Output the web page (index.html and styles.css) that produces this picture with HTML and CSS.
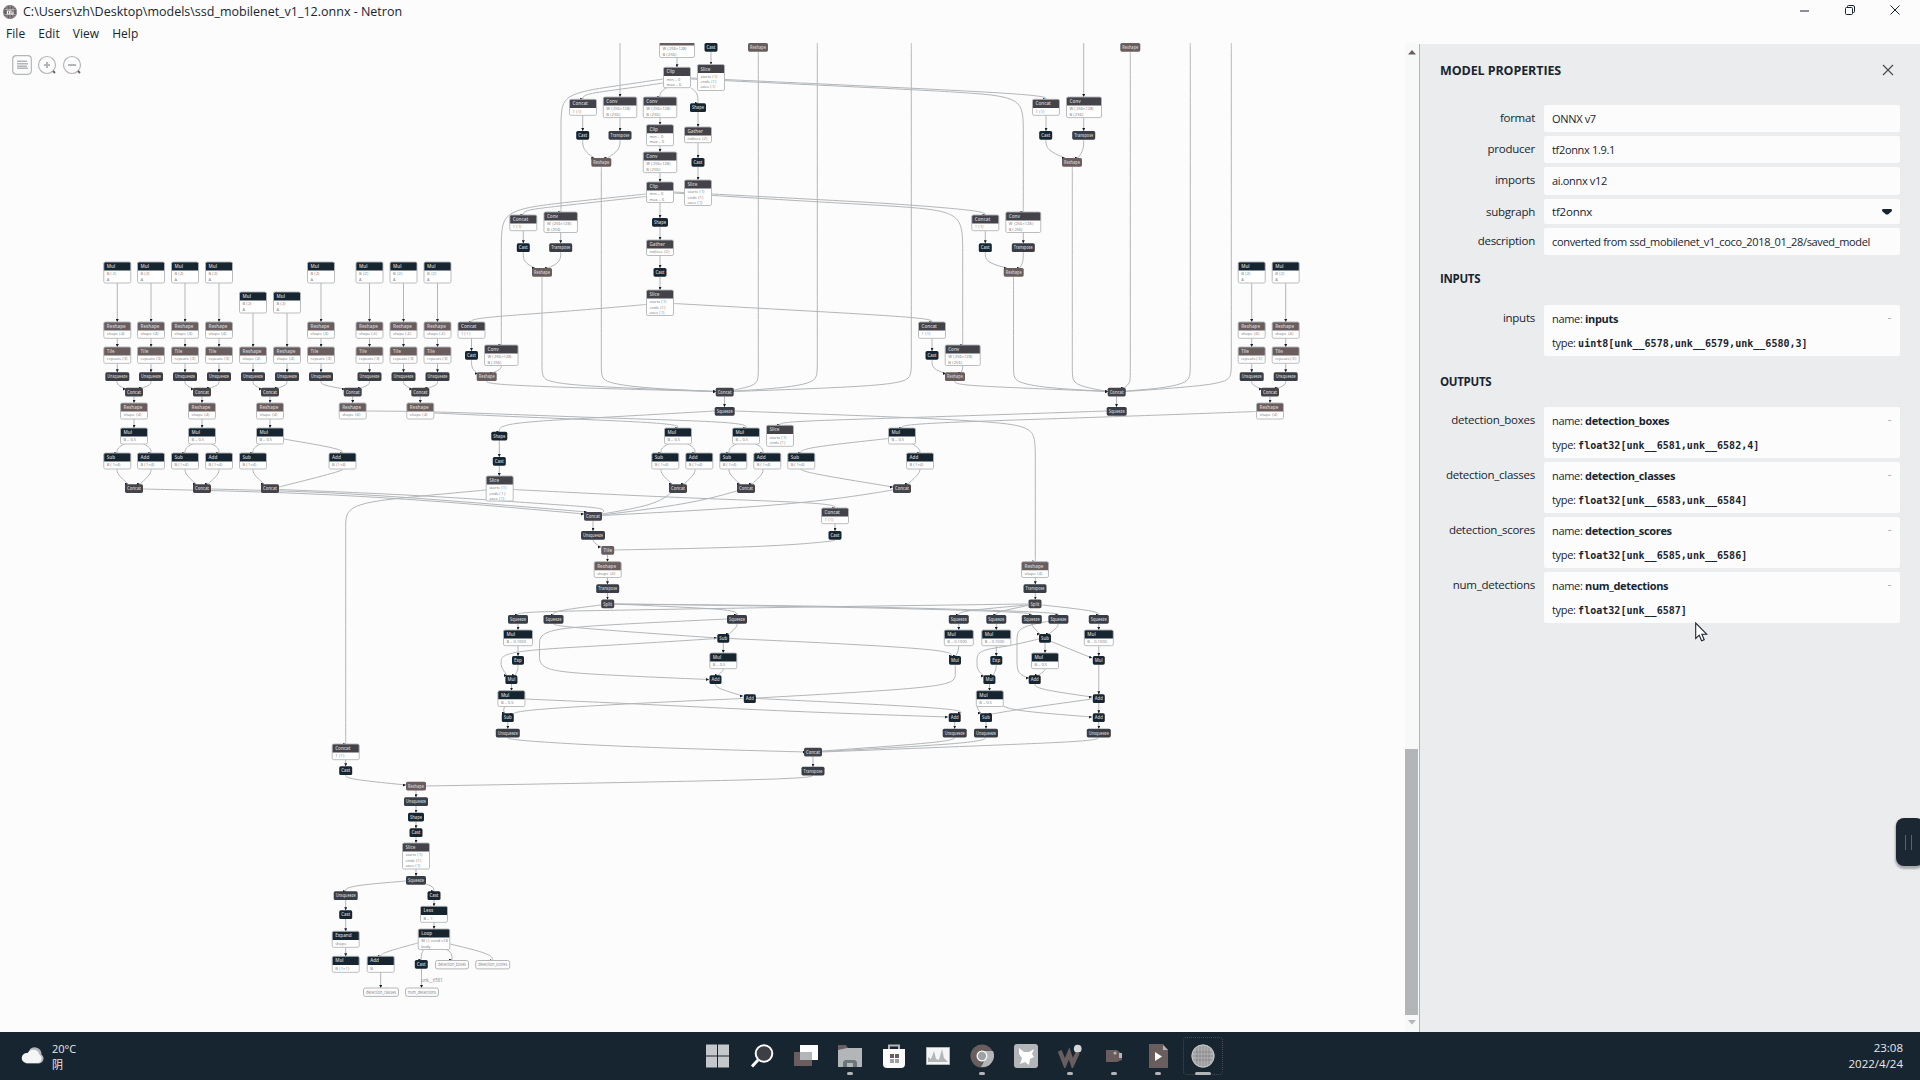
FILE: index.html
```
<!DOCTYPE html>
<html lang="en">
<head>
<meta charset="utf-8">
<title>ssd_mobilenet_v1_12.onnx - Netron</title>
<link rel="stylesheet" href="styles.css">
</head>
<body>
<header class="titlebar">
  <svg class="app-icon" viewBox="0 0 14 14"><circle cx="7" cy="7" r="7" fill="#6a5d5d"/><path d="M4 2.2v9.6M7 1v12M10 2.2v9.6M2 4.5h10M1.5 9.5h11" stroke="#b2b6b9" stroke-width=".8" fill="none"/><circle cx="7" cy="7" r="6.4" fill="none" stroke="#b2b6b9" stroke-dasharray="1.2 1.2"/><path d="M4.5 6h2v3h-2zM8 5v4h2V6.5" stroke="#fff" stroke-width=".9" fill="none"/></svg>
  <span class="window-title">C:\Users\zh\Desktop\models\ssd_mobilenet_v1_12.onnx - Netron</span>
  <div class="window-controls">
    <svg viewBox="0 0 12 12"><path d="M1 7h9"/></svg>
    <svg viewBox="0 0 12 12"><path d="M1.5 4.5a1 1 0 0 1 1-1h5a1 1 0 0 1 1 1v5a1 1 0 0 1-1 1h-5a1 1 0 0 1-1-1zM3.5 3.500V2.500a1 1 0 0 1 1-1h4.500a1.500 1.500 0 0 1 1.500 1.500v4.500a1 1 0 0 1-1 1h-1"/></svg>
    <svg viewBox="0 0 12 12"><path d="M1.500 1.500l9 9M10.500 1.500l-9 9"/></svg>
  </div>
</header>
<nav class="menubar"><span>File</span><span>Edit</span><span>View</span><span>Help</span></nav>
<main class="workspace">
  <section class="canvas">
    <svg id="graph" class="graph" width="1405" height="989" viewBox="0 43 1405 989">
      <defs><marker id="arrow" viewBox="0 0 4 4" refX="4" refY="2" markerWidth="3" markerHeight="3" markerUnits="userSpaceOnUse" orient="auto"><path class="arrow" d="M0 0L4 2L0 4z"/></marker></defs>
    </svg>
    <div class="toolbar">
      <svg width="20" height="20" viewBox="0 0 20 20"><rect x=".7" y=".7" width="18.600" height="18.600" rx="3.500"/><path stroke-width="1.400" d="M5 6.300h10M5 8.800h11M5 11.300h10M5 13.300h11"/></svg>
      <svg width="20" height="20" viewBox="0 0 20 20"><circle cx="10" cy="10" r="8.500"/><path stroke-width="2" d="M7 10h6M10 7v6"/><path class="tail" d="M16 16l2 2"/></svg>
      <svg width="20" height="20" viewBox="0 0 20 20"><circle cx="10" cy="10" r="8.500"/><path stroke-width="2" d="M6 10h8"/><path class="tail" d="M16 16l2 2"/></svg>
    </div>
  </section>
  <div class="scrollbar">
    <svg class="up" viewBox="0 0 8 5"><path d="M4 0l4 4.500H0z"/></svg>
    <div class="thumb"></div>
    <svg class="down" viewBox="0 0 8 5"><path d="M0 0h8L4 4.500z"/></svg>
  </div>
  <aside class="sidebar">
    <div class="sidebar-head"><h1>MODEL PROPERTIES</h1><svg viewBox="0 0 12 12"><path d="M1 1l10 10M11 1L1 11"/></svg></div>
    <dl class="props">
      <dt>format</dt><dd>ONNX v7</dd>
      <dt>producer</dt><dd>tf2onnx 1.9.1</dd>
      <dt>imports</dt><dd>ai.onnx v12</dd>
      <dt>subgraph</dt><dd class="select">tf2onnx<svg viewBox="0 0 10 6"><path d="M.5 0h9L10 2 6 5.500H4L0 2z"/></svg></dd>
      <dt>description</dt><dd>converted from ssd_mobilenet_v1_coco_2018_01_28/saved_model</dd>
    </dl>
    <h2>INPUTS</h2>
    <dl class="args">
      <dt>inputs</dt><dd><i>-</i><p>name: <b>inputs</b></p><p>type: <code>uint8[unk__6578,unk__6579,unk__6580,3]</code></p></dd>
    </dl>
    <h2 class="outputs">OUTPUTS</h2>
    <dl class="args">
      <dt>detection_boxes</dt><dd><i>-</i><p>name: <b>detection_boxes</b></p><p>type: <code>float32[unk__6581,unk__6582,4]</code></p></dd>
      <dt>detection_classes</dt><dd><i>-</i><p>name: <b>detection_classes</b></p><p>type: <code>float32[unk__6583,unk__6584]</code></p></dd>
      <dt>detection_scores</dt><dd><i>-</i><p>name: <b>detection_scores</b></p><p>type: <code>float32[unk__6585,unk__6586]</code></p></dd>
      <dt>num_detections</dt><dd><i>-</i><p>name: <b>num_detections</b></p><p>type: <code>float32[unk__6587]</code></p></dd>
    </dl>
  </aside>
</main>
<div class="side-handle"><span></span><span></span></div>
<svg class="cursor" viewBox="0 0 13 20"><path d="M.7 1v15.500l3.600-3.300 2.300 5.600 2.600-1.100-2.300-5.400h5z"/></svg>
<footer class="taskbar">
  <div class="weather">
    <svg width="23" height="17" viewBox="0 0 23 17"><path fill="#b2b6b9" d="M5 16.500h13a5 5 0 0 0 2.500-9A7 7 0 0 0 9 2z"/><path fill="#f4f5f5" d="M5 16h11a4.500 4.500 0 0 0 2.500-8.300A6.500 6.500 0 0 0 6.500 6 5 5 0 0 0 5 16z"/></svg>
    <div><div>20°C</div><div>阴</div></div>
  </div>
  <div class="apps">
    <div class="app"><svg viewBox="0 0 24 24"><path fill="#c4c8ca" d="M0 .5h11v11H0zM12 .5h11v11H12zM0 12.500h11v11H0zM12 12.500h11v11H12z"/></svg></div>
    <div class="app"><svg viewBox="0 0 24 24"><circle cx="14" cy="9.500" r="8.300" fill="#3d3f46" stroke="#fafafa" stroke-width="2"/><path d="M8 16l-6 6.500" stroke="#fafafa" stroke-width="3"/></svg></div>
    <div class="app"><svg viewBox="0 0 24 24"><path fill="#6a5d5d" d="M0 8h18v14H0z"/><path fill="#fff" d="M6 1h18v15H6z"/><path fill="#b2b6b9" d="M6 8h12v8H6z"/></svg></div>
    <div class="app run"><svg viewBox="0 0 24 24"><path fill="#6a5d5d" d="M0 1h8l2 3v4H0z"/><path fill="#b2b6b9" d="M0 6l9-2h15v19H0z"/><path fill="#6b757c" d="M5 23v-5l2-2h10l2 2v5z"/><path fill="#b2b6b9" d="M9 19h6v4H9z"/></svg></div>
    <div class="app"><svg viewBox="0 0 24 24"><path d="M7 6V1.500h10V6" stroke="#b2b6b9" stroke-width="2" fill="none"/><path fill="#fcfcfc" d="M1 5h22v15q0 4-4 4H5q-4 0-4-4z"/><path fill="#6a5d5d" d="M8 10h4v4H8zM13 10h4v4h-4z"/><path fill="#9ca2a6" d="M8 15h4v4H8zM13 15h4v4h-4z"/></svg></div>
    <div class="app"><svg viewBox="0 0 24 24"><path fill="#f4f5f5" stroke="#b2b6b9" d="M.5 3.500h23v17H.5z"/><path fill="#b2b6b9" d="M2 18v-5l3 2 3-8 2 8 3 1 3-11 2 9 4 4z"/></svg></div>
    <div class="app run"><svg viewBox="0 0 24 24"><circle cx="12" cy="12" r="11.500" fill="#6a5d5d"/><path fill="#b2b6b9" d="M12 7h11a11.500 11.500 0 0 1-12 16l5-9z"/><circle cx="12" cy="12" r="5.500" fill="#fafafa"/><circle cx="12" cy="12" r="4.200" fill="#9ca2a6"/></svg></div>
    <div class="app"><svg viewBox="0 0 24 24"><rect width="24" height="24" rx="3" fill="#b2b6b9"/><path fill="#fff" d="M5 4l5 4h5l5-3-2 5 2 3-4 2-1 6-4-3-5 2 2-6-3-4z"/></svg></div>
    <div class="app run"><svg viewBox="0 0 28 24"><path d="M2 6l6 15 5-12 4 12 6-13" stroke="#6a5d5d" stroke-width="5" fill="none"/><circle cx="23" cy="3.500" r="4.500" fill="#d5d8d9"/></svg></div>
    <div class="app run"><svg viewBox="0 0 24 24"><path fill="#6a5d5d" d="M4 6h11l5 4v6l-5 2H4z"/><circle cx="13" cy="9" r="1.500" fill="#b2b6b9"/><path fill="#b2b6b9" d="M17 9h3v5h-3z"/></svg></div>
    <div class="app run"><svg viewBox="0 0 24 24"><path fill="#6a5d5d" d="M3 0h14l5 6v18H3z"/><path fill="#b2b6b9" d="M17 1v5h5z"/><path fill="#fff" d="M9 8l7 4.500L9 17z"/></svg></div>
    <div class="app active"><svg viewBox="0 0 24 24"><circle cx="12" cy="12" r="11.500" fill="#aeb1b4"/><path d="M6 3v18M9 1v22M12 1v22M15 1v22M18 3v18M1 8h22M1 12h22M1 16h22" stroke="#857d7f" stroke-width=".7"/><circle cx="12" cy="12" r="11" fill="none" stroke="#c3c6c8"/></svg></div>
  </div>
  <div class="clock"><div>23:08</div><div>2022/4/24</div></div>
</footer>
<script src="graph.js"></script>
</body>
</html>
```
FILE: styles.css
```
* { box-sizing: border-box; }
body { margin: 0; width: 1920px; height: 1080px; overflow: hidden; display: flex; flex-direction: column; background: #fcfcfc; color: #172531; font-family: "Open Sans", "Noto Sans", "Noto Sans CJK SC", sans-serif; }
.titlebar { height: 22px; display: flex; align-items: center; padding: 1px 19px 0 3px; }
.app-icon { width: 14px; height: 14px; }
.window-title { margin-left: 6px; font-size: 12.5px; line-height: 20px; white-space: nowrap; }
.window-controls { margin-left: auto; display: flex; gap: 33px; padding-bottom: 3px; }
.window-controls svg { width: 12px; height: 12px; fill: none; stroke: #172531; }
.menubar { height: 21px; display: flex; gap: 13px; padding-left: 6px; font-size: 12px; letter-spacing: .05px; line-height: 23px; }
.workspace { height: 989px; display: flex; }
.canvas { width: 1405px; position: relative; overflow: hidden; }
.graph { display: block; }
.toolbar { position: absolute; left: 12px; top: 12px; display: flex; gap: 5px; }
.toolbar svg { fill: none; stroke: #b2b6b9; stroke-width: 1.2; }
.toolbar .tail { stroke: #6a5d5d; stroke-width: 1.8; }

.edge { fill: none; stroke: #b2b6b9; stroke-width: 1; }
.arrow { fill: #17202a; }
.frame { fill: none; stroke: #b2b6b9; stroke-width: .9; }
.body { fill: #fff; }
.op { fill: #172531; }
.shape { fill: #6a5d5d; }
.tensor { fill: #44434a; }
.mixed { fill: #393d45; }
.label { fill: #d0d2d4; font: 600 4.6px "Open Sans", sans-serif; }
.attr { fill: #74767a; font: 4px "Open Sans", sans-serif; }
.io { fill: #fcfcfc; stroke: #b2b6b9; }
.io-label { fill: #85898c; font: 4.4px "Open Sans", sans-serif; text-anchor: middle; }

.scrollbar { width: 14px; display: flex; flex-direction: column; align-items: center; background: #f7f8f8; padding: 7px 1px 7px 0; }
.scrollbar svg { width: 8px; height: 5px; fill: #6a5d5d; }
.scrollbar .down { fill: #b2b6b9; margin-top: auto; }
.thumb { width: 13px; height: 266px; background: #b2b6b9; margin-top: 694px; }

.sidebar { width: 501px; margin-top: 1px; background: #ebeced; border-left: 1px solid #b2b6b9; padding: 0 19px 0 20px; }
.sidebar-head { height: 61px; display: flex; align-items: flex-start; justify-content: space-between; padding: 17px 7px 0 0; }
h1, h2 { margin: 0; font-weight: 700; white-space: nowrap; }
h1 { font-size: 12.5px; line-height: 20px; letter-spacing: -.1px; }
.sidebar-head svg { width: 12px; height: 12px; fill: none; stroke: #4c4a4e; stroke-width: 1.2; margin-top: 3px; }
dl { margin: 0; display: grid; grid-template-columns: 95px 356px; column-gap: 9px; }
dt { text-align: right; white-space: nowrap; font-size: 11.5px; letter-spacing: -.25px; }
dd { margin: 0; background: #fcfcfc; border-radius: 2px; padding-left: 8px; white-space: nowrap; font-size: 11px; letter-spacing: -.33px; }
.props { grid-template-rows: 27px 27px 28px 25px 27px; row-gap: 4px; }
.props dt { line-height: 26px; }
.props dd { line-height: 28px; }
.props dd:last-child { line-height: 27px; }
.props .select { line-height: 27px; display: flex; justify-content: space-between; align-items: center; padding-right: 8px; font-size: 11.5px; letter-spacing: -.2px; }
.select svg { width: 10px; height: 6px; fill: #172531; }
h2 { font-size: 11.5px; letter-spacing: -.3px; line-height: 16px; padding: 16px 0; height: 50px; }
.outputs { padding-top: 18px; height: 51px; }
.args { grid-auto-rows: 51px; row-gap: 4px; }
.args dt { line-height: 25px; }
.args dd { padding: 2px 8px 0; position: relative; }
.args p { margin: 0; line-height: 24px; }
.args b { font-weight: 700; }
.args i { position: absolute; right: 9px; top: 0; line-height: 24px; font-style: normal; color: #9da1a4; }
code { font: bold 10px "DejaVu Sans Mono", monospace; letter-spacing: .02px; }

.side-handle { position: absolute; left: 1896px; top: 818px; width: 28px; height: 48px; background: #1b2732; border-radius: 8px; box-shadow: 0 2px 2px 1px #a9aaad; display: flex; gap: 5px; padding: 17px 9px; }
.side-handle span { width: 1px; height: 15px; background: #6a5d5d; }
.cursor { position: absolute; left: 1695px; top: 622px; width: 13px; height: 20px; fill: #fff; stroke: #172531; stroke-width: 1.1; }

.taskbar { height: 48px; background: #172531; display: flex; justify-content: space-between; color: #e8e9ea; font-size: 11px; line-height: 16px; padding: 0 17px 0 21px; }
.weather { width: 300px; display: flex; gap: 8px; padding-top: 9px; }
.weather svg { margin-top: 6px; }
.clock { width: 300px; padding-top: 8px; text-align: right; font-size: 11.5px; }
.apps { position: absolute; left: 696px; display: flex; }
.app { width: 44.050px; height: 48px; padding: 12px 10px 0; position: relative; }
.app svg { width: 24px; height: 24px; display: block; }
.app.run::after, .app.active::after { content: ""; position: absolute; left: 19px; top: 40px; width: 6px; height: 3px; border-radius: 2px; background: #b2b6b9; }
.app.active::after { left: 14px; width: 16px; }
.app.active::before { content: ""; position: absolute; inset: 5px 2px; border: 1px dotted #4b4b51; border-radius: 4px; }
```
FILE: graph.js
```
const NS = 'http://www.w3.org/2000/svg';
const root = document.getElementById('graph');

function add(tag, attrs, text) {
  const el = document.createElementNS(NS, tag);
  for (const key in attrs) el.setAttribute(key, attrs[key]);
  if (text) el.textContent = text;
  root.appendChild(el);
}

// Smooth an edge as a uniform cubic B-spline through its control points.
function spline(p) {
  if (p.length < 3) return `M${p[0]}L${p[1]}`;
  let d = `M${p[0]}`;
  const q = [p[0], p[0], ...p, p[p.length - 1], p[p.length - 1]];
  const mix = (a, b, k) => [0, 1].map(i => (a[i] * (3 - k) + b[i] * k) / 3);
  for (let i = 1; i < q.length - 2; i++) {
    const c1 = mix(q[i], q[i + 1], 1), c2 = mix(q[i], q[i + 1], 2);
    const n = mix(q[i + 1], q[i + 2], 1);
    d += `C${c1} ${c2} ${(c2[0] + n[0]) / 2},${(c2[1] + n[1]) / 2}`;
  }
  return d + `L${p[p.length - 1]}`;
}
function edge(...n) {
  const p = [];
  for (let i = 0; i < n.length; i += 2) p.push([n[i], n[i + 1]]);
  add('path', { class: 'edge', d: spline(p), 'marker-end': 'url(#arrow)' });
}
function down(x, ...ys) { for (let i = 0; i < ys.length; i += 2) edge(x, ys[i], x, ys[i + 1]); }

const SMALL = { Cast: ['op', 13], Shape: ['op', 16], Reshape: ['shape', 20], Transpose: ['mixed', 23], Unsqueeze: ['mixed', 24], Concat: ['tensor', 18], Squeeze: ['mixed', 20], Tile: ['shape', 13], Split: ['tensor', 13], Sub: ['op', 12], Mul: ['op', 12], Add: ['op', 12], Exp: ['op', 12] };
function pill(name, y, ...xs) {
  const [cls, w] = SMALL[name];
  for (const x of xs) {
    add('rect', { class: cls, x: x - w / 2, y, width: w, height: 8.7, rx: 1.6 });
    add('text', { class: 'label', x: x - w / 2 + 2, y: y + 6, textLength: w - 4, lengthAdjust: 'spacingAndGlyphs' }, name);
  }
}
function box(name, cls, y, h, w, attrs, ...xs) {
  for (const x of xs) {
    const l = x - w / 2;
    add('rect', { class: 'body', x: l, y, width: w, height: h, rx: 1.6 });
    add('path', { class: cls, d: `M${l} ${y + 8.6}v-7q0-1.600 1.600-1.600h${w - 3.2}q1.600 0 1.600 1.600v7z` });
    add('rect', { class: 'frame', x: l, y, width: w, height: h, rx: 1.6 });
    // A header scrolled above the viewport has no visible label.
    if (y > 40) add('text', { class: 'label', x: l + 3, y: y + 6 }, name);
    attrs.forEach((a, i) => add('text', { class: 'attr', x: l + 3, y: y + 13.4 + i * 5.1 }, a));
  }
}

const cols = [117.3, 151, 185, 219, 321, 369.5, 403.5, 437.5, 1251.7, 1285.7];
const all = [...cols, 253, 287];

// Edges: parameter columns
cols.forEach(x => down(x, 283, 322, 338.5, 347, 363.5, 372.3));
[253, 287].forEach(x => down(x, 313, 347, 363.5, 372.3));
[[117, 134, 151], [185, 202, 219], [253, 270, 287], [321, 352.7, 369.5], [403.5, 420.3, 437.5], [1251.7, 1270, 1285.7]].forEach(([a, c, b]) => {
  edge(a, 381, a, 385, c - 8, 389); edge(b, 381, b, 385, c + 8, 388); down(c, 396.5, 403);
});
[134, 202, 270].forEach(x => down(x, 419, 428));
[134, 202, 270, 678, 746].forEach(x => {
  edge(x - 9, 443.5, x - 17, 448, x - 17, 453);
  edge(x - 17, 469, x - 17, 474, x - 6, 484);
  if (x !== 270) { edge(x + 9, 443.5, x + 17, 448, x + 17, 453); edge(x + 17, 469, x + 17, 474, x + 6, 484); }
});
edge(283.5, 439, 342.5, 449, 342.5, 453); edge(342.5, 469, 342.5, 471, 279, 487);
edge(888.5, 438.5, 801, 448, 801, 453); edge(912, 443.5, 920, 449, 920, 453);
edge(801, 468.5, 801, 472, 893, 487); edge(920, 468.5, 920, 473, 908, 484);

// Edges: feature extractor
down(677, 57, 67.3); down(711, 51.5, 64.5);
edge(663, 79, 612, 86.5, 561, 94, 561, 120, 561, 212);
edge(663, 83, 623, 89, 583, 94, 583, 99);
edge(691, 78, 900, 87.5, 1046, 95, 1046, 99.3);
edge(691, 79, 900, 89, 975, 93, 1023.3, 98, 1023.3, 125, 1023.3, 212);
edge(667, 87.5, 660, 92, 660, 97); edge(691, 88, 698, 93, 698, 103.3);
down(660, 117.7, 124.7, 145.7, 152, 172.7, 182, 202.5, 218, 226.7, 240, 255.5, 268, 276.7, 290);
down(698, 112, 127, 142.7, 158, 166.7, 180);
down(620, 43, 97); down(1083.7, 43, 97);
edge(646, 194, 560, 203, 501.3, 210, 501.3, 240, 501.3, 345);
edge(646, 196.5, 560, 206, 523.3, 210, 523.3, 215);
edge(674, 192, 817, 199.5, 900, 204, 985, 211, 985.3, 215);
edge(674, 193, 817, 202, 915, 207, 962.7, 213, 962.7, 245, 962.7, 345);
edge(646, 304.5, 560, 312, 471.5, 318, 471.5, 322);
edge(674, 303.5, 800, 310.5, 932, 318, 932, 322);
[[582.7, 601.3, 620, 115.7, 117.7, 131, 158], [1046, 1072, 1083.7, 115.7, 117.7, 131, 158], [523.3, 542, 560.7, 230.7, 232.5, 243.3, 268], [985.3, 1013.7, 1023.3, 230.7, 232.5, 243.3, 268]].forEach(([a, c, b, ya, yb, t, r]) => {
  down(a, ya, t); down(b, yb, t);
  edge(a, t + 8.7, a, t + 19, c - 7, r); edge(b, t + 8.7, b, t + 19, c + 6, r);
});
[[471.5, 486.7, 501.3], [932, 955, 962.7]].forEach(([a, c, b]) => {
  down(a, 338.5, 351);
  edge(a, 359.7, a, 369, c - 9, 373.5); edge(b, 365.5, b, 369, c + 6, 373);
});

// Edges: into the two wide concats. Doubled control points keep the bends tight.
edge(601.3, 166.7, 601.3, 300, 601.3, 372, 601.3, 382, 640, 388, 716, 391.5);
edge(542, 276.5, 542, 300, 542, 372, 542, 382, 595, 387, 716, 391.5);
edge(487, 381, 487, 384, 560, 387.5, 716, 391.5);
edge(758.3, 52, 758.3, 300, 758.3, 372, 758.3, 384, 744, 388, 734, 390);
edge(817.3, 43, 817.3, 300, 817.3, 370, 817.3, 382, 785, 388, 734, 391);
edge(911.3, 43, 911.3, 300, 911.3, 370, 911.3, 382, 860, 387, 734, 391.5);
edge(1013.5, 276.5, 1013.5, 300, 1013.5, 372, 1013.5, 382, 1045, 388, 1108, 391.5);
edge(1072.3, 166.7, 1072.3, 300, 1072.3, 372, 1072.3, 383, 1088, 388, 1108, 391.5);
edge(955, 381, 955, 385, 1020, 388, 1108, 391.5);
edge(1130.3, 52, 1130.3, 300, 1130.3, 375, 1130.3, 383, 1124, 388);
edge(1190.3, 43, 1190.3, 300, 1190.3, 370, 1190.3, 382, 1165, 388, 1126, 391);
edge(1231.3, 43, 1231.3, 300, 1231.3, 370, 1231.3, 382, 1190, 387, 1126, 391.5);
down(724.5, 396.5, 407); down(1116.5, 396.5, 407);
edge(715, 411, 593, 418, 499.3, 423, 499.3, 432);
edge(735, 411, 900, 417, 1000, 422, 1035.3, 428, 1035.3, 450, 1035.3, 561.7);
edge(1107, 411, 900, 418, 780, 421.5, 780, 425);
edge(1256, 411.5, 1080, 418, 902, 423.5, 902, 428);
edge(367, 411, 440, 411.5, 600, 418, 746, 422, 746, 428);
edge(434, 413, 520, 417, 678, 423, 678, 428);

// Edges: box decoding
down(499.3, 440.500, 457, 465.7, 476);
edge(143, 489, 300, 492.5, 440, 501, 584, 514);
edge(211, 489, 330, 492, 450, 500.5, 587, 512);
edge(279, 489.5, 420, 495, 560, 505, 607, 508, 602, 513);
edge(486, 490, 410, 497, 345.7, 504, 345.7, 525, 345.7, 560, 345.7, 744);
edge(513, 489.5, 680, 498, 835, 503, 835, 508);
edge(671, 493, 655, 505, 602, 514); edge(737, 491, 690, 504, 602, 515); edge(893, 490, 800, 505, 602, 515.5);
down(593, 520.7, 531); edge(593, 539.7, 594, 543, 601, 547);
down(835, 523.5, 531); edge(835, 540, 835, 541, 770, 547, 614, 550);
down(607.5, 554.7, 561.7, 577.5, 584.3, 593, 599.5); down(1035.3, 577.5, 584.3, 593, 599.5);
edge(601, 605, 553, 611, 553.5, 615); edge(614, 604, 680, 607, 737, 610, 737, 615);
edge(614, 604, 850, 607, 1031, 612, 1031.8, 615); edge(614, 604, 850, 606, 1058, 612, 1058.4, 615);
edge(1028, 604, 800, 607, 600, 610.5, 518, 612, 518, 615); edge(1028, 605, 959, 611, 958.8, 615);
edge(1028, 605.5, 996, 612, 996.3, 615); edge(1042, 605, 1098, 611, 1098.8, 615);
down(518, 624, 630, 645.5, 656); down(996.3, 624, 630, 645.5, 656);
edge(518, 665, 518, 670, 515, 675.3); edge(996.3, 665, 996, 670, 993, 675.3);
down(958.8, 624, 630); edge(958.8, 645.5, 958.5, 650, 956, 656);
down(1098.8, 624, 630, 645.5, 656, 665, 694.3, 703, 713.3, 722, 728.7);
edge(553.5, 624, 560, 627, 717, 638); edge(737, 624, 737, 627, 729, 634);
edge(727, 619, 600, 625, 539.5, 630, 539.5, 645, 539.5, 655, 539.5, 670, 590, 674.5, 709, 679.5);
edge(717, 638.5, 600, 646, 502, 651, 501, 662, 501, 667, 507, 675.5);
edge(729, 638.5, 830, 643, 950, 650, 952, 656);
down(723.3, 642.7, 653); edge(723.3, 668.5, 723, 671, 718, 675.3);
edge(715.5, 684, 716, 688, 743, 696); edge(955.3, 665, 955.3, 674, 955.3, 684, 900, 690, 757, 698);
edge(757, 698.5, 850, 703, 960, 709, 961, 713); edge(743, 698.5, 640, 703, 520, 710, 513, 714);
down(511.5, 684, 690.7); edge(505, 706, 503, 710, 505, 713); edge(525, 699, 640, 704, 800, 712, 948, 717);
[507.8, 954.7, 986].forEach(x => down(x, 722, 728.7));
edge(1032, 624, 1032, 626, 1040, 634); edge(1058, 624, 1058, 627, 1049, 634);
edge(1050, 621, 1017, 627, 1017, 640, 1017, 660, 1017, 674, 1029, 678);
edge(1039, 639, 1005, 647, 977, 650, 977, 662, 977, 670, 984, 676); edge(1050, 641, 1092, 658);
down(1045, 642.7, 653); edge(1045, 668.5, 1045, 671, 1038, 675.3); edge(1035, 684, 1036, 689, 1092, 697);
down(989.5, 684, 690.7); edge(977, 706, 978, 710, 981, 713); edge(1003, 706, 1015, 711, 1092, 717);
edge(1092, 699, 1020, 709, 992, 714);
edge(508, 737.5, 508, 740, 620, 747, 806, 752); edge(955, 737.5, 950, 742, 822, 751);
edge(986, 737.5, 980, 743, 822, 751.5); edge(1098.8, 737.5, 1095, 741, 1000, 745, 822, 752);
down(813, 756.5, 766.7); edge(813, 775.5, 805, 779, 600, 783, 426, 786);

// Edges: post-processing
down(345.7, 759.5, 766.3, 900, 910.3, 919, 931.3, 947.5, 956.3); edge(345.7, 775, 346, 779, 406, 785);
down(416, 790.4, 797.3, 806, 812.7, 821.4, 828.3, 837, 843, 869, 876);
edge(406, 881, 345.7, 886, 345.7, 891.3); edge(426, 884, 434, 887, 434, 891.3);
down(434, 900, 906.3, 922.5, 929); down(380.7, 972, 988); down(421.5, 968.7, 988);
edge(418, 943, 381, 953, 381, 956.3); edge(424, 949.5, 421.3, 953, 421.3, 960);
edge(446, 949, 452, 953, 452, 960); edge(450, 944, 492, 954, 492.7, 960.5);

// Nodes
const B = ['B ⟨2⟩', 'A'], dims = ['shape ⟨4⟩'], slice = ['starts ⟨1⟩', 'ends ⟨1⟩', 'axes ⟨1⟩'];
const conv = ['W ⟨256×128⟩', 'B ⟨256⟩'], clip = ['min = 0', 'max = 6'];
box('Mul', 'op', 262, 21, 27, B, ...cols); box('Mul', 'op', 292, 21, 27, B, 253, 287);
box('Reshape', 'shape', 322, 16.3, 27, dims, ...cols);
box('Tile', 'shape', 347, 16.3, 27, ['repeats ⟨3⟩'], ...cols); box('Reshape', 'shape', 347, 16.3, 27, dims, 253, 287);
pill('Unsqueeze', 372.3, ...all);
pill('Concat', 387.7, 134, 202, 270, 352.7, 420.3, 1270, 724.7, 1116.7);
box('Reshape', 'shape', 403, 16, 27, dims, 134, 202, 270, 352.7, 420.3, 1270);
box('Mul', 'op', 428, 16, 27, ['B = 0.5'], 134, 202, 270, 678, 746, 902);
box('Sub', 'op', 453, 16, 27, ['B ⟨1×4⟩'], 117.3, 185, 253, 665.3, 733.3, 801.3);
box('Add', 'op', 453, 16, 27, ['B ⟨1×4⟩'], 151, 219, 342.5, 699.3, 767.3, 920);
pill('Concat', 484.2, 134, 202, 270, 678, 746, 902);
box('Conv', 'shape', 37, 20.5, 35, conv, 677); pill('Cast', 43, 711); pill('Reshape', 43, 758, 1130.3);
box('Clip', 'tensor', 67.3, 20.4, 27, clip, 677); box('Slice', 'tensor', 64.5, 26, 27, slice, 711);
box('Concat', 'tensor', 99.3, 16, 27, ['1 ⟨1⟩'], 583, 1046);
box('Conv', 'tensor', 97, 20.6, 33.5, conv, 620, 660); box('Conv', 'tensor', 97, 20.6, 35, conv, 1084);
pill('Shape', 103.3, 698); box('Clip', 'tensor', 124.7, 21, 27, clip, 660);
box('Gather', 'tensor', 127, 15.7, 27, ['indices ⟨2⟩'], 698);
pill('Cast', 131, 582.7, 1045.7); pill('Transpose', 131, 620, 1083.7);
box('Conv', 'tensor', 152, 20.6, 33.5, conv, 660); pill('Cast', 158, 698); pill('Reshape', 158, 601.3, 1072);
box('Clip', 'tensor', 182, 20.5, 27, clip, 660); box('Slice', 'tensor', 180, 25.5, 27, slice, 698);
box('Concat', 'tensor', 215, 15.7, 27, ['1 ⟨1⟩'], 523.3, 985.3);
box('Conv', 'tensor', 212, 20.5, 33.5, conv, 560.7); box('Conv', 'tensor', 212, 20.5, 35, conv, 1023.3);
pill('Shape', 218, 660); pill('Cast', 243.3, 523.3, 985.3); pill('Transpose', 243.3, 560.7, 1023.3);
box('Gather', 'tensor', 240, 15.5, 27, ['indices ⟨2⟩'], 660);
pill('Reshape', 268, 542, 1013.7); pill('Cast', 268, 660); box('Slice', 'tensor', 290, 25.5, 27, slice, 660);
box('Concat', 'tensor', 322, 16.3, 27, ['1 ⟨1⟩'], 471.5, 932); pill('Cast', 351, 471.5, 932);
box('Conv', 'tensor', 345, 20.5, 33.5, conv, 501.3); box('Conv', 'tensor', 345, 20.5, 35, conv, 962.7);
pill('Reshape', 372.3, 486.7, 955); pill('Squeeze', 407, 724.7, 1116.7);
pill('Shape', 431.7, 499.3); pill('Cast', 457, 499.3); box('Slice', 'tensor', 476, 25, 27, slice, 499.7);
box('Slice', 'tensor', 425.3, 21, 27, ['starts ⟨1⟩', 'ends ⟨1⟩'], 780);
pill('Concat', 512, 593); pill('Unsqueeze', 531, 593); pill('Tile', 546, 607.7);
box('Concat', 'tensor', 508, 15.7, 27, ['1 ⟨1⟩'], 835); pill('Cast', 531, 835);
box('Reshape', 'shape', 561.7, 15.8, 27, dims, 607.7, 1035); pill('Transpose', 584.3, 607.7, 1035); pill('Split', 599.5, 607.7, 1035);
pill('Squeeze', 615, 518, 553.5, 737, 958.8, 996.3, 1031.8, 1058.4, 1098.8);
box('Mul', 'op', 630, 15.7, 29, ['B = 0.1000'], 518, 958.8, 996.3, 1098.8);
pill('Sub', 634, 723.3, 1045); box('Mul', 'op', 653, 15.7, 27, ['B = 0.5'], 723.3, 1045);
pill('Exp', 656, 518, 996.3); pill('Mul', 656, 955, 1098.8);
pill('Mul', 675.3, 511.4, 989.4); pill('Add', 675.3, 715.5, 1034.7);
box('Mul', 'op', 690.7, 15.8, 27, ['B = 0.5'], 511.4, 989.8); pill('Add', 694.3, 749.8, 1098.8);
pill('Sub', 713.3, 507.8, 986); pill('Add', 713.3, 954.7, 1098.8);
pill('Unsqueeze', 728.7, 507.8, 954.7, 986, 1098.8); pill('Concat', 747.7, 813); pill('Transpose', 766.7, 813);
box('Concat', 'tensor', 744, 15.7, 27, ['1 ⟨1⟩'], 345.7); pill('Cast', 766.3, 345.7);
pill('Reshape', 781.7, 416); pill('Unsqueeze', 797.3, 416); pill('Shape', 812.7, 416); pill('Cast', 828.3, 416);
box('Slice', 'tensor', 843, 26, 27, slice, 416); pill('Squeeze', 876, 416);
pill('Unsqueeze', 891.3, 345.7); pill('Cast', 891.3, 434); pill('Cast', 910.3, 345.7);
box('Less', 'op', 906.3, 16, 27, ['B = 1'], 434); box('Expand', 'op', 931.3, 16, 27, ['shape'], 345.7);
box('Loop', 'op', 929, 20.5, 31.5, ['M ⟨⟩ cond v18', 'body'], 434);
box('Mul', 'op', 956.3, 16, 27, ['B ⟨1×1⟩'], 345.7); box('Add', 'op', 956.3, 16, 27, ['B'], 380.7); pill('Cast', 960, 421.3);
[['detection_boxes', 452, 960.5, 33], ['detection_scores', 492.7, 960.5, 34], ['detection_classes', 381, 988, 35], ['num_detections', 422, 988, 33]].forEach(([t, x, y, w]) => {
  add('rect', { class: 'io', x: x - w / 2, y, width: w, height: 8.4, rx: 2 });
  add('text', { class: 'io-label', x, y: y + 5.6, textLength: w - 5, lengthAdjust: 'spacingAndGlyphs' }, t);
});
add('text', { class: 'io-label', x: 432, y: 981.5 }, 'unk__6581');
```
